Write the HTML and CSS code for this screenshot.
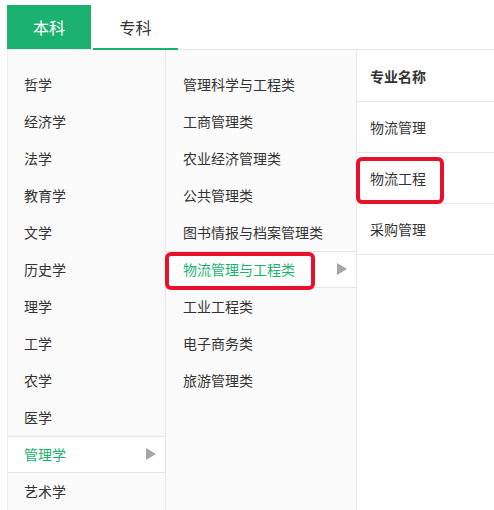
FILE: index.html
```html
<!DOCTYPE html>
<html lang="zh-CN">
<head>
    <meta charset="UTF-8">
    <title>专业选择</title>
    <link rel="stylesheet" href="styles.css">
</head>
<body>
    <div class="picker">
        <!-- 学历层次 -->
        <div class="tabs">
            <div class="tab active">本科</div>
            <div class="tab hover">专科</div>
        </div>

        <div class="columns">
            <!-- 学科门类 -->
            <ul class="col col-cat">
                <li>哲学</li>
                <li>经济学</li>
                <li>法学</li>
                <li>教育学</li>
                <li>文学</li>
                <li>历史学</li>
                <li>理学</li>
                <li>工学</li>
                <li>农学</li>
                <li>医学</li>
                <li class="selected">管理学<span class="arrow"></span></li>
                <li>艺术学</li>
            </ul>

            <!-- 专业类 -->
            <ul class="col col-class">
                <li>管理科学与工程类</li>
                <li>工商管理类</li>
                <li>农业经济管理类</li>
                <li>公共管理类</li>
                <li>图书情报与档案管理类</li>
                <li class="selected mark">物流管理与工程类<span class="arrow"></span></li>
                <li>工业工程类</li>
                <li>电子商务类</li>
                <li>旅游管理类</li>
            </ul>

            <!-- 专业名称 -->
            <ul class="col col-major">
                <li class="head">专业名称</li>
                <li>物流管理</li>
                <li class="mark">物流工程</li>
                <li>采购管理</li>
            </ul>
        </div>
    </div>
</body>
</html>
```

FILE: styles.css
```css
* {
    margin: 0;
    padding: 0;
    box-sizing: border-box;
}

body {
    font-family: "Noto Sans CJK SC", "Noto Sans", sans-serif;
    font-size: 14px;
    color: #333;
    background-color: #fff;
    padding: 5px 0 0 7px;
    height: 510px;
    overflow: hidden;
}

ul {
    list-style: none;
}

.tabs {
    display: flex;
    height: 45px;
    border-bottom: 1px solid #e6e6e6;
}

.tab {
    width: 85px;
    display: flex;
    align-items: center;
    justify-content: center;
    font-size: 16px;
    color: #333;
    margin-right: 1px;
}

.tab.active {
    width: 84px;
    margin-right: 2px;
    background-color: #1bb270;
    color: #fff;
}

.tab.hover {
    border-bottom: 2px solid #1bb270;
    margin-bottom: -1px;
}

.columns {
    display: flex;
    height: 470px;
}

.col {
    position: relative;
}

.col-cat {
    width: 159px;
    padding-top: 16px;
    background-color: #fafafa;
    border-left: 1px solid #eee;
    border-right: 1px solid #e8e8e8;
}

.col-class {
    width: 191px;
    padding-top: 16px;
    background-color: #fbfbfb;
    border-right: 1px solid #e8e8e8;
}

.col-cat li,
.col-class li {
    position: relative;
    height: 37px;
    line-height: 35px;
    padding-left: 16px;
    border-top: 1px solid transparent;
    border-bottom: 1px solid transparent;
}

.col-class li {
    padding-left: 17px;
}

.col li.selected {
    background-color: #fff;
    color: #1bb270;
    border-top-color: #e6e6e6;
    border-bottom-color: #e6e6e6;
}

.arrow {
    position: absolute;
    right: 9px;
    top: 11px;
    width: 0;
    height: 0;
    border-top: 6px solid transparent;
    border-bottom: 6px solid transparent;
    border-left: 10px solid #a6a6a6;
}

.col-major {
    flex: 1;
}

.col-major li {
    position: relative;
    height: 51px;
    line-height: 50px;
    padding-left: 13px;
    border-bottom: 1px solid #e8e8e8;
}

.col-major li.head {
    height: 52px;
    font-weight: bold;
    line-height: 52px;
}

/* 红框标注 */
.mark::after {
    content: "";
    position: absolute;
    box-sizing: border-box;
    border: 4px solid #e8102b;
    border-radius: 6px;
}

.col-class li.mark::after {
    left: -1px;
    top: 0;
    width: 150px;
    height: 38px;
}

.col-major li.mark::after {
    left: -1px;
    top: 4px;
    width: 88px;
    height: 47px;
}
```
